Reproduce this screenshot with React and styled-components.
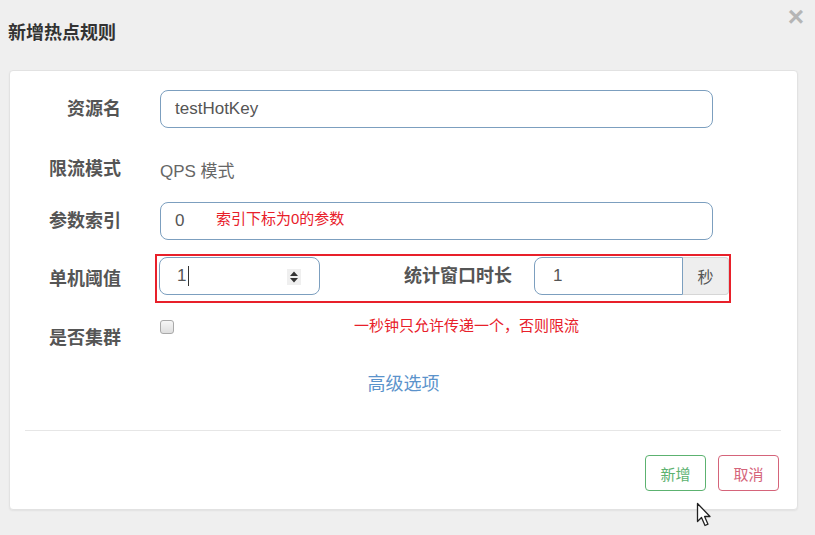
import styled, { createGlobalStyle } from 'styled-components';

const GlobalStyle = createGlobalStyle`
  body {
    margin: 0;
    background: #efefef;
    font-family: "Liberation Sans", "Noto Sans CJK SC", sans-serif;
  }
`;

const Page = styled.div`
  position: relative;
  width: 815px;
  height: 535px;
  overflow: hidden;
`;

const Header = styled.div`
  display: flex;
  justify-content: space-between;
  align-items: flex-start;
  height: 70px;
  padding: 0 11px 0 8px;
  box-sizing: border-box;
`;

const Title = styled.h4`
  margin: 23px 0 0;
  font-size: 18px;
  line-height: 20px;
  font-weight: bold;
  color: #333;
`;

const Close = styled.span`
  margin-top: 5px;
  font-size: 28px;
  line-height: 24px;
  font-weight: bold;
  color: #b5b5b5;
`;

const Card = styled.div`
  margin: 0 17px 0 9px;
  background: #fff;
  border: 1px solid #e2e2e2;
  border-radius: 4px;
  box-shadow: 0 1px 2px rgba(0, 0, 0, 0.06);
  padding-top: 19px;
`;

const Row = styled.div`
  display: flex;
  align-items: ${(p) => (p.$top ? 'flex-start' : 'center')};
  margin-top: ${(p) => p.$mt || 0}px;
  min-height: ${(p) => (p.$h ? `${p.$h}px` : 'auto')};
`;

const Label = styled.label`
  flex: none;
  width: 111px;
  margin-right: 39px;
  padding-top: ${(p) => p.$pt || 0}px;
  text-align: right;
  font-size: 18px;
  line-height: 18px;
  font-weight: bold;
  color: #555;
`;

const Field = styled.div`
  position: relative;
  display: flex;
  align-items: center;
  box-sizing: border-box;
  width: ${(p) => p.$w}px;
  height: 38px;
  padding: 0 14px;
  border: 1px solid #7c9fbf;
  border-radius: ${(p) => p.$radius || '8px'};
  font-size: 17px;
  color: #555;
  background: #fff;
`;

const Static = styled.span`
  font-size: 17px;
  color: #666;
`;

const Note = styled.span`
  font-size: 15px;
  line-height: 17px;
  color: #e8202a;
`;

const FieldNote = styled(Note)`
  position: absolute;
  left: 55px;
  top: 7px;
`;

const Caret = styled.span`
  display: inline-block;
  width: 1px;
  height: 20px;
  margin-left: 2px;
  background: #333;
`;

const Spin = styled.span`
  position: absolute;
  right: 18px;
  top: 11px;
  width: 14px;
  height: 16px;
  background: #efefef;
`;

const Highlight = styled.div`
  display: flex;
  align-items: center;
  margin-left: -5px;
  padding: 1px 0 6px 2px;
  border: 2px solid #e8202a;
`;

const InlineLabel = styled(Label)`
  width: auto;
  margin: 0 22px 0 84px;
`;

const Addon = styled.span`
  display: flex;
  align-items: center;
  justify-content: center;
  box-sizing: border-box;
  width: 46px;
  height: 38px;
  border: 1px solid #d6d6d6;
  border-left: 0;
  border-radius: 0 4px 4px 0;
  background: #eee;
  font-size: 16px;
  color: #555;
`;

const Check = styled.span`
  flex: none;
  box-sizing: border-box;
  width: 14px;
  height: 14px;
  border: 1px solid #a9a9a9;
  border-radius: 3px;
  background: linear-gradient(#f6f6f6, #dedede);
`;

const CheckNote = styled(Note)`
  margin: -3px 0 0 180px;
`;

const MoreLink = styled.a`
  display: block;
  margin-top: 27px;
  text-align: center;
  font-size: 18px;
  line-height: 20px;
  color: #5b93cb;
  text-decoration: none;
`;

const Divider = styled.hr`
  margin: 36px 16px 0 15px;
  border: 0;
  border-top: 1px solid #e6e6e6;
`;

const Footer = styled.div`
  display: flex;
  justify-content: flex-end;
  gap: 12px;
  padding: 24px 18px 18px 0;
`;

const Button = styled.button`
  width: 61px;
  height: 36px;
  border: 1px solid ${(p) => p.$color};
  border-radius: 4px;
  background: #fff;
  color: ${(p) => p.$color};
  font-family: inherit;
  font-size: 15px;
  padding: 0;
`;

const Pointer = styled.svg`
  position: absolute;
  left: 696px;
  top: 502px;
`;

export default function App() {
  return (
    <Page>
      <GlobalStyle />
      <Header>
        <Title>新增热点规则</Title>
        <Close>×</Close>
      </Header>
      <Card>
        <Row>
          <Label>资源名</Label>
          <Field $w={553}>testHotKey</Field>
        </Row>
        <Row $mt={22} $h={38}>
          <Label>限流模式</Label>
          <Static>QPS 模式</Static>
        </Row>
        <Row $mt={14}>
          <Label>参数索引</Label>
          <Field $w={553}>
            0<FieldNote>索引下标为0的参数</FieldNote>
          </Field>
        </Row>
        <Row $mt={14}>
          <Label>单机阈值</Label>
          <Highlight>
            <Field $w={161} style={{ paddingLeft: 17 }}>
              1<Caret />
              <Spin>
                <svg width="14" height="16" viewBox="0 0 14 16">
                  <path d="M3 7 L7 2.5 L11 7 Z M3 9 L7 13.5 L11 9 Z" fill="#333" />
                </svg>
              </Spin>
            </Field>
            <InlineLabel>统计窗口时长</InlineLabel>
            <Field $w={149} $radius="8px 0 0 8px" style={{ paddingLeft: 18 }}>
              1
            </Field>
            <Addon>秒</Addon>
          </Highlight>
        </Row>
        <Row $mt={17} $top>
          <Label $pt={9}>是否集群</Label>
          <Check />
          <CheckNote>一秒钟只允许传递一个，否则限流</CheckNote>
        </Row>
        <MoreLink href="#">高级选项</MoreLink>
        <Divider />
        <Footer>
          <Button $color="#5cb270">新增</Button>
          <Button $color="#d5647a">取消</Button>
        </Footer>
      </Card>
      <Pointer width="18" height="26" viewBox="0 0 18 26">
        <path
          d="M1.5 1.5 L1.5 19.5 L5.5 15.5 L9 23.5 L12 22.2 L8.6 14.5 L14 14.5 Z"
          fill="#fff"
          stroke="#222"
          strokeWidth="1.3"
          strokeLinejoin="round"
        />
      </Pointer>
    </Page>
  );
}
